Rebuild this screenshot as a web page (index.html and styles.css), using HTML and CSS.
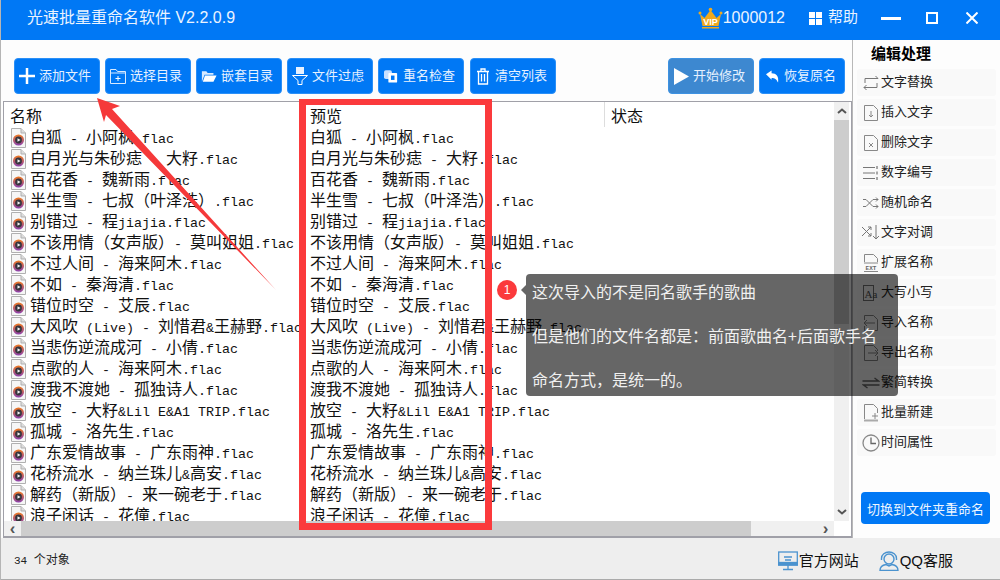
FILE: index.html
```html
<!DOCTYPE html>
<html lang="zh-CN">
<head>
    <meta charset="UTF-8">
    <title>光速批量重命名软件</title>
    <link rel="stylesheet" href="styles.css">
</head>
<body>
    <svg class="defs" width="0" height="0">
        <defs>
            <linearGradient id="disc" x1="0" y1="0" x2="0" y2="1">
                <stop offset="0" stop-color="#f07a1e"/>
                <stop offset="1" stop-color="#8a3fb0"/>
            </linearGradient>
        </defs>
        <symbol id="flac" viewBox="0 0 17 20">
            <path d="M1.500 .5H11L15.500 5V19.500H1.500Z" fill="#f6f6f6" stroke="#b0b0b0"/>
            <path d="M11 .5V5H15.500" fill="#ddd" stroke="#b0b0b0"/>
            <circle cx="8.500" cy="12" r="5.500" fill="url(#disc)"/>
            <circle cx="8.500" cy="12" r="3.400" fill="#34343c"/>
            <path d="M7.500 10.200V13.800L10.500 12Z" fill="#f2f2f2"/>
        </symbol>
    </svg>
    <div class="app">
        <header class="titlebar">
            <div class="app-title">光速批量重命名软件 V2.2.0.9</div>
            <div class="title-right">
                <svg class="vip" width="25" height="22" viewBox="0 0 25 22">
                    <path d="M2 7L6.500 11L12.500 3L18.500 11L23 7L20.500 19H4.500Z" fill="#f0a91e"/>
                    <circle cx="2" cy="6" r="1.500" fill="#f0a91e"/>
                    <circle cx="12.500" cy="2.500" r="1.800" fill="#f0a91e"/>
                    <circle cx="23" cy="6" r="1.500" fill="#f0a91e"/>
                    <rect x="4" y="20" width="17" height="1.500" fill="#f0a91e"/>
                    <text x="12.500" y="18" class="vip-text">VIP</text>
                </svg>
                <span class="user-id">1000012</span>
                <svg class="help-icon" width="13" height="13" viewBox="0 0 13 13" fill="#fff">
                    <rect width="6" height="6"/><rect x="7" width="6" height="6"/>
                    <rect y="7" width="6" height="6"/><rect x="7" y="7" width="6" height="6"/>
                </svg>
                <span class="help">帮助</span>
                <svg class="win-btn btn-min" width="20" height="3"><rect width="20" height="3" fill="#fff"/></svg>
                <svg class="win-btn btn-max" width="12" height="12"><rect x="1" y="1" width="10" height="10" fill="none" stroke="#fff" stroke-width="2"/></svg>
                <svg class="win-btn btn-close" width="12" height="12"><path d="M.5 .5L11.500 11.500M11.500 .5L.5 11.500" stroke="#fff" stroke-width="2"/></svg>
            </div>
        </header>

        <div class="main">
            <div class="left">
                <div class="toolbar">
                    <button class="tool">
                        <span class="tool-icon"><svg width="16" height="16" viewBox="0 0 16 16"><path d="M8 0V16M0 8H16" stroke="#fff" stroke-width="2.500"/></svg></span>添加文件
                    </button>
                    <button class="tool">
                        <span class="tool-icon"><svg width="16" height="16" viewBox="0 0 16 16" fill="none" stroke="#d8eaff"><path d="M.5 15.500V1.500H6L7.500 3.500H15.500V15.500Z"/><path d="M.5 5H15.500"/><path d="M8 8V13M5.500 10.500H10.500" stroke="#fff"/></svg></span>选择目录
                    </button>
                    <button class="tool">
                        <span class="tool-icon"><svg width="16" height="13" viewBox="0 0 18 14"><path d="M1 13V1H6L7.500 3H14V5H4L1 13Z" fill="#d8eaff"/><path d="M4.500 6H17.500L14 13H2Z" fill="#fff"/></svg></span>嵌套目录
                    </button>
                    <button class="tool">
                        <span class="tool-icon"><svg width="16" height="18" viewBox="0 0 16 18"><rect x="4" y="0" width="8" height="7" fill="#e6f1ff"/><path d="M.5 8.500H15.500L10 13.500V17.500H6V13.500Z" fill="none" stroke="#fff"/></svg></span>文件过虑
                    </button>
                    <button class="tool">
                        <span class="tool-icon"><svg width="14" height="14" viewBox="0 0 16 15"><rect x="0" y="1" width="9" height="10" rx="2" fill="#c9e0ff"/><rect x="5" y="4" width="10" height="11" rx="1" fill="#fff"/><rect x="8" y="7" width="4" height="5" fill="#0078f5"/></svg></span>重名检查
                    </button>
                    <button class="tool tool-clear">
                        <span class="tool-icon"><svg width="14" height="17" viewBox="0 0 14 17" fill="none" stroke="#fff" stroke-width="1.300"><path d="M1 3.500H13M5 3V1H9V3"/><path d="M2.500 3.500V16H11.500V3.500"/><path d="M5.500 6V13.500M8.500 6V13.500"/></svg></span>清空列表
                    </button>
                    <div class="tool-space"></div>
                    <button class="tool start">
                        <span class="tool-icon"><svg width="15" height="17" viewBox="0 0 15 17"><path d="M0 0L15 8.500L0 17Z" fill="#fff"/></svg></span>开始修改
                    </button>
                    <button class="tool">
                        <span class="tool-icon"><svg width="13" height="13" viewBox="0 0 14 13"><path d="M0 4L6 0V3C11 3 14 6 13 13C11 9 9.500 8 6 8V10Z" fill="#fff"/></svg></span>恢复原名
                    </button>
                </div>

                <div class="table">
                    <div class="table-view">
                        <div class="table-head">
                            <div class="col col-name">名称</div>
                            <div class="col col-preview">预览</div>
                            <div class="col col-state">状态</div>
                        </div>
                        <div class="rows">
                            <div class="row"><div class="col col-name"><svg class="ficon"><use href="#flac"/></svg>白狐<i> - </i>小阿枫<i>.flac</i></div><div class="col col-preview">白狐<i> - </i>小阿枫<i>.flac</i></div></div>
                            <div class="row"><div class="col col-name"><svg class="ficon"><use href="#flac"/></svg>白月光与朱砂痣<i> - </i>大籽<i>.flac</i></div><div class="col col-preview">白月光与朱砂痣<i> - </i>大籽<i>.flac</i></div></div>
                            <div class="row"><div class="col col-name"><svg class="ficon"><use href="#flac"/></svg>百花香<i> - </i>魏新雨<i>.flac</i></div><div class="col col-preview">百花香<i> - </i>魏新雨<i>.flac</i></div></div>
                            <div class="row"><div class="col col-name"><svg class="ficon"><use href="#flac"/></svg>半生雪<i> - </i>七叔（叶泽浩）<i>.flac</i></div><div class="col col-preview">半生雪<i> - </i>七叔（叶泽浩）<i>.flac</i></div></div>
                            <div class="row"><div class="col col-name"><svg class="ficon"><use href="#flac"/></svg>别错过<i> - </i>程<i>jiajia.flac</i></div><div class="col col-preview">别错过<i> - </i>程<i>jiajia.flac</i></div></div>
                            <div class="row"><div class="col col-name"><svg class="ficon"><use href="#flac"/></svg>不该用情（女声版）<i>- </i>莫叫姐姐<i>.flac</i></div><div class="col col-preview">不该用情（女声版）<i>- </i>莫叫姐姐<i>.flac</i></div></div>
                            <div class="row"><div class="col col-name"><svg class="ficon"><use href="#flac"/></svg>不过人间<i> - </i>海来阿木<i>.flac</i></div><div class="col col-preview">不过人间<i> - </i>海来阿木<i>.flac</i></div></div>
                            <div class="row"><div class="col col-name"><svg class="ficon"><use href="#flac"/></svg>不如<i> - </i>秦海清<i>.flac</i></div><div class="col col-preview">不如<i> - </i>秦海清<i>.flac</i></div></div>
                            <div class="row"><div class="col col-name"><svg class="ficon"><use href="#flac"/></svg>错位时空<i> - </i>艾辰<i>.flac</i></div><div class="col col-preview">错位时空<i> - </i>艾辰<i>.flac</i></div></div>
                            <div class="row"><div class="col col-name"><svg class="ficon"><use href="#flac"/></svg>大风吹<i> (Live) - </i>刘惜君<i>&amp;</i>王赫野<i>.flac</i></div><div class="col col-preview">大风吹<i> (Live) - </i>刘惜君<i>&amp;</i>王赫野<i>.flac</i></div></div>
                            <div class="row"><div class="col col-name"><svg class="ficon"><use href="#flac"/></svg>当悲伤逆流成河<i> - </i>小倩<i>.flac</i></div><div class="col col-preview">当悲伤逆流成河<i> - </i>小倩<i>.flac</i></div></div>
                            <div class="row"><div class="col col-name"><svg class="ficon"><use href="#flac"/></svg>点歌的人<i> - </i>海来阿木<i>.flac</i></div><div class="col col-preview">点歌的人<i> - </i>海来阿木<i>.flac</i></div></div>
                            <div class="row"><div class="col col-name"><svg class="ficon"><use href="#flac"/></svg>渡我不渡她<i> - </i>孤独诗人<i>.flac</i></div><div class="col col-preview">渡我不渡她<i> - </i>孤独诗人<i>.flac</i></div></div>
                            <div class="row"><div class="col col-name"><svg class="ficon"><use href="#flac"/></svg>放空<i> - </i>大籽<i>&amp;Lil E&amp;A1 TRIP.flac</i></div><div class="col col-preview">放空<i> - </i>大籽<i>&amp;Lil E&amp;A1 TRIP.flac</i></div></div>
                            <div class="row"><div class="col col-name"><svg class="ficon"><use href="#flac"/></svg>孤城<i> - </i>洛先生<i>.flac</i></div><div class="col col-preview">孤城<i> - </i>洛先生<i>.flac</i></div></div>
                            <div class="row"><div class="col col-name"><svg class="ficon"><use href="#flac"/></svg>广东爱情故事<i> - </i>广东雨神<i>.flac</i></div><div class="col col-preview">广东爱情故事<i> - </i>广东雨神<i>.flac</i></div></div>
                            <div class="row"><div class="col col-name"><svg class="ficon"><use href="#flac"/></svg>花桥流水<i> - </i>纳兰珠儿<i>&amp;</i>高安<i>.flac</i></div><div class="col col-preview">花桥流水<i> - </i>纳兰珠儿<i>&amp;</i>高安<i>.flac</i></div></div>
                            <div class="row"><div class="col col-name"><svg class="ficon"><use href="#flac"/></svg>解药（新版）<i>- </i>来一碗老于<i>.flac</i></div><div class="col col-preview">解药（新版）<i>- </i>来一碗老于<i>.flac</i></div></div>
                            <div class="row"><div class="col col-name"><svg class="ficon"><use href="#flac"/></svg>浪子闲话<i> - </i>花僮<i>.flac</i></div><div class="col col-preview">浪子闲话<i> - </i>花僮<i>.flac</i></div></div>
                        </div>
                        <div class="hscroll">
                            <span class="sb-arrow">‹</span>
                            <div class="hthumb"></div>
                            <span class="sb-arrow">›</span>
                        </div>
                    </div>
                    <div class="vscroll">
                        <svg class="sb-icon" width="10" height="6"><path d="M1 5L5 1.500L9 5" fill="none" stroke="#555" stroke-width="2"/></svg>
                        <div class="vthumb"></div>
                        <svg class="sb-icon sb-down" width="10" height="6"><path d="M1 1L5 4.500L9 1" fill="none" stroke="#555" stroke-width="2"/></svg>
                    </div>
                </div>
            </div>

            <aside class="side">
                <div class="side-title">编辑处理</div>
                <div class="side-item">
                    <svg width="16" height="16" viewBox="0 0 16 16" fill="none" stroke="#777"><path d="M2 8V3.500H15M12.500 1L15 3.500"/><path d="M14 8V12.500H1M3.500 10L1 12.500L3.500 15"/></svg><span>文字替换</span>
                </div>
                <div class="side-item">
                    <svg width="16" height="16" viewBox="0 0 16 16" fill="none" stroke="#888"><path d="M1.500 .5H10.500L14.500 4.500V15.500H1.500Z"/><path d="M8 6V12M6 10L8 12L10 10"/></svg><span>插入文字</span>
                </div>
                <div class="side-item">
                    <svg width="16" height="16" viewBox="0 0 16 16" fill="none" stroke="#888"><path d="M1.500 .5H10.500L14.500 4.500V15.500H1.500Z"/><path d="M6 8L10 12M10 8L6 12"/></svg><span>删除文字</span>
                </div>
                <div class="side-item">
                    <svg width="16" height="16" viewBox="0 0 16 16" fill="none" stroke="#777"><path d="M0 2.500H12M0 8H12M0 13.500H12"/><path d="M14 1V4M14 6.500V9.500M14 12V15" stroke="#555"/></svg><span>数字编号</span>
                </div>
                <div class="side-item">
                    <svg width="16" height="12" viewBox="0 0 16 12" fill="none" stroke="#777"><path d="M0 2.500H3L10 9.500H15M0 9.500H3L10 2.500H15M13 .5L15 2.500L13 4.500M13 7.500L15 9.500L13 11.500"/></svg><span>随机命名</span>
                </div>
                <div class="side-item">
                    <svg width="18" height="15" viewBox="0 0 18 15" fill="none" stroke="#777"><path d="M0 2L9 11M0 11L9 2M6 2H9V5M6 11H9V8"/><path d="M14 0V14M11 11L14 14L17 11"/></svg><span>文字对调</span>
                </div>
                <div class="side-item">
                    <svg width="16" height="18" viewBox="0 0 16 18" fill="none" stroke="#888"><path d="M1.500 8V.5H10.500L14.500 4.500V8"/><text x="8" y="16" class="ext-text">EXT</text><path d="M1 9H15M1 17.500H15"/></svg><span>扩展名称</span>
                </div>
                <div class="side-item">
                    <svg width="16" height="16" viewBox="0 0 16 16" fill="none" stroke="#777"><rect x=".5" y=".5" width="10" height="15"/><text x="1.500" y="13" class="aa-text">Aa</text></svg><span>大写小写</span>
                </div>
                <div class="side-item">
                    <svg width="16" height="16" viewBox="0 0 16 16" fill="none" stroke="#888"><path d="M1.500 5V.5H10.500L14.500 4.500V15.500H1.500V11"/><path d="M12 8H1M4 5L1 8L4 11"/></svg><span>导入名称</span>
                </div>
                <div class="side-item">
                    <svg width="16" height="16" viewBox="0 0 16 16" fill="none" stroke="#888"><path d="M1.500 15.500V.5H10.500L14.500 4.500V6M14.500 11V15.500H1.500"/><path d="M5 8H15M12 5L15 8L12 11"/></svg><span>导出名称</span>
                </div>
                <div class="side-item">
                    <svg width="17" height="12" viewBox="0 0 17 12" fill="none" stroke="#666" stroke-width="1.300"><path d="M0 4H16L12 1M17 8H1L5 11"/></svg><span>繁简转换</span>
                </div>
                <div class="side-item">
                    <svg width="16" height="18" viewBox="0 0 16 18" fill="none" stroke="#888"><path d="M1.500 15V.5H10.500L14.500 4.500V9"/><path d="M9 12H15M12 9V15"/><path d="M1 16.500H15" stroke="#aaa" stroke-width="2"/></svg><span>批量新建</span>
                </div>
                <div class="side-item">
                    <svg width="18" height="18" viewBox="0 0 18 18" fill="none" stroke="#888" stroke-width="1.300"><circle cx="9" cy="9" r="8"/><path d="M9 3.500V9.500H14" stroke="#666"/></svg><span>时间属性</span>
                </div>
                <button class="switch-btn">切换到文件夹重命名</button>
            </aside>
        </div>

        <footer class="statusbar">
            <span class="count"><i>34 </i>个对象</span>
            <div class="links">
                <a class="link">
                    <svg width="20" height="20" viewBox="0 0 20 20" fill="none" stroke="#4b93cf" stroke-width="1.300"><rect x=".7" y="1" width="18.600" height="13"/><rect x=".7" y="11.500" width="18.600" height="2.500" fill="#4b93cf"/><path d="M6 6H14M7 9H13M10 14V18M5 18.500H15"/></svg>官方网站
                </a>
                <a class="link">
                    <svg width="20" height="20" viewBox="0 0 20 20" fill="none" stroke="#4b93cf" stroke-width="1.400"><circle cx="10" cy="8" r="5"/><path d="M2.500 9V7.500C2.500 3.500 6 1 10 1C14 1 17.500 3.500 17.500 7.500V9"/><path d="M1 19.500C1 16 4 14 7 13.500L10 15L13 13.500C16 14 19 16 19 19.500Z"/></svg>QQ客服
                </a>
            </div>
        </footer>

        <!-- 标注 -->
        <div class="red-box"></div>
        <svg class="red-arrow" width="290" height="300" viewBox="0 0 290 300">
            <polygon points="97,98 120,106 112,109 276,290 106,115 104,122" fill="#f5393a"/>
        </svg>
        <div class="badge">1</div>
        <div class="tip">
            <p>这次导入的不是同名歌手的歌曲</p>
            <p>但是他们的文件名都是：前面歌曲名+后面歌手名</p>
            <p>命名方式，是统一的。</p>
        </div>
    </div>
</body>
</html>
```

FILE: styles.css
```css
* {
    box-sizing: border-box;
}
body {
    margin: 0;
    font-family: "Noto Sans CJK SC", "Liberation Sans", sans-serif;
    background: #fff;
}
.defs {
    position: absolute;
}
.app {
    position: relative;
    width: 1000px;
    height: 580px;
    overflow: hidden;
    display: flex;
    flex-direction: column;
    background: #fdfdfd;
    border-left: 1px solid #b5b5b5;
}

/* 标题栏 */
.titlebar {
    height: 40px;
    background: #0078f5;
    color: #eaf3ff;
    display: flex;
    align-items: center;
    justify-content: space-between;
    padding: 0 22px 4px 27px;
    margin-left: -1px;
    flex-shrink: 0;
}
.app-title {
    font-family: "Liberation Sans", "Noto Sans CJK SC", sans-serif;
    font-size: 16px;
    line-height: 24px;
}
.title-right {
    display: flex;
    align-items: center;
    font-family: "Liberation Sans", "Noto Sans CJK SC", sans-serif;
}
.vip-text {
    font: bold 9px "Liberation Sans", sans-serif;
    fill: #fff;
    text-anchor: middle;
}
.user-id {
    font-size: 16px;
    margin-right: 24px;
}
.help {
    font-size: 15px;
    line-height: 20px;
    margin: -3px 0 0 6px;
}
.help-icon {
    display: block;
}
.win-btn {
    display: block;
}
.btn-min {
    margin-left: 23px;
}
.btn-max {
    margin-left: 25px;
}
.btn-close {
    margin-left: 28px;
}

.main {
    flex: 1;
    display: flex;
    min-height: 0;
}
.left {
    width: 851px;
    display: flex;
    flex-direction: column;
}

/* 工具栏 */
.toolbar {
    height: 61px;
    display: flex;
    gap: 5px;
    padding: 18px 0 0 13px;
    flex-shrink: 0;
}
.tool {
    width: 86px;
    height: 36px;
    background: #0078f5;
    border: 1px solid #2a8ff7;
    border-radius: 4px;
    color: #e6f1ff;
    font-family: inherit;
    font-size: 13px;
    line-height: 18px;
    padding: 0 0 2px 0;
    display: flex;
    align-items: center;
}
.tool-icon {
    width: 24px;
    margin-top: 2px;
    display: flex;
    justify-content: center;
    flex-shrink: 0;
}
.tool-clear {
    margin-left: 1px;
}
.tool.start {
    background: #3d88d0;
    border-color: #3d92e2;
}
.tool-space {
    width: 102px;
}

/* 列表 */
.table {
    flex: 1;
    margin-left: 2px;
    display: flex;
    border: 1px solid #a0a0a8;
    border-bottom-width: 2px;
    background: #fff;
    min-height: 0;
}
.table-view {
    width: 830px;
    display: flex;
    flex-direction: column;
}
.table-head {
    height: 24px;
    display: flex;
    font-size: 16px;
    line-height: 26px;
    color: #111;
    flex-shrink: 0;
}
.table-head .col {
    padding-left: 6px;
}
.table-head .col-state {
    border-left: 1px solid #ddd;
    height: 25px;
}
.col-name {
    width: 300px;
    flex-shrink: 0;
}
.col-preview {
    width: 300px;
    flex-shrink: 0;
    white-space: nowrap;
}
.col-state {
    flex: 1;
}
.rows {
    flex: 1;
    overflow: hidden;
}
.row {
    display: flex;
    height: 21px;
    font-size: 16px;
    line-height: 21px;
    color: #111;
    white-space: nowrap;
}
.row .col {
    padding-left: 6px;
}
.row i {
    font: normal 13.33px/21px "Liberation Mono", monospace;
    white-space: pre;
}
.ficon {
    width: 17px;
    height: 20px;
    margin-right: 3px;
    vertical-align: -5px;
}

/* 滚动条 */
.hscroll {
    height: 15px;
    background: #f0f0f0;
    display: flex;
    align-items: center;
    flex-shrink: 0;
}
.sb-arrow {
    width: 17px;
    text-align: center;
    font: bold 17px/13px "Liberation Sans", sans-serif;
    color: #555;
}
.hthumb {
    width: 730px;
    height: 15px;
    background: #cdcdcd;
    margin-right: auto;
}
.vscroll {
    width: 15px;
    background: #f0f0f0;
    display: flex;
    flex-direction: column;
    align-items: center;
    margin-bottom: 15px;
}
.sb-icon {
    margin: 6px 0;
    flex-shrink: 0;
}
.sb-down {
    margin-top: auto;
}
.vthumb {
    width: 15px;
    height: 204px;
    background: #cdcdcd;
}

/* 右侧 */
.side {
    flex: 1;
    border-left: 1px solid #b8b8b8;
    background: #fdfdfd;
    padding: 0 4px 14px 4px;
    display: flex;
    flex-direction: column;
    gap: 3px;
}
.side-title {
    height: 26px;
    font-size: 15px;
    font-weight: bold;
    line-height: 26px;
    padding-left: 14px;
    color: #000;
}
.side-item {
    height: 27px;
    background: #f9f9f9;
    border-radius: 3px;
    font-size: 13px;
    color: #222;
    display: flex;
    align-items: center;
    gap: 1px;
    padding-left: 5px;
}
.side-item span {
    line-height: 18px;
    margin-top: -3px;
}
.side-item svg {
    width: 18px;
    flex-shrink: 0;
}
.ext-text {
    font: bold 6px "Liberation Mono", monospace;
    fill: #666;
    stroke: none;
    text-anchor: middle;
}
.aa-text {
    font: 11px "Liberation Serif", serif;
    fill: #555;
    stroke: none;
}
.switch-btn {
    width: 129px;
    height: 32px;
    margin: auto 0 0 4px;
    background: #0078f5;
    border: none;
    border-radius: 4px;
    color: #eef6ff;
    font-family: inherit;
    font-size: 13px;
    padding: 0;
}

/* 状态栏 */
.statusbar {
    height: 42px;
    background: #eeeeee;
    border-bottom: 1px solid #aaa;
    display: flex;
    align-items: center;
    justify-content: space-between;
    padding: 0 47px 0 13px;
    flex-shrink: 0;
}
.count {
    font-size: 12px;
    color: #222;
}
.count i {
    font: normal 11px "Liberation Mono", monospace;
    white-space: pre;
}
.links {
    display: flex;
    gap: 20px;
    margin-top: 4px;
}
.link {
    display: flex;
    align-items: center;
    font-size: 15px;
    line-height: 22px;
    color: #111;
    font-family: "Liberation Sans", "Noto Sans CJK SC", sans-serif;
    gap: 1px;
}

/* 标注层 */
.red-box {
    position: absolute;
    left: 298px;
    top: 99px;
    width: 193px;
    height: 431px;
    border: 7px solid #fb3a3c;
    border-top-width: 6px;
}
.red-arrow {
    position: absolute;
    left: -1px;
    top: 0;
}
.badge {
    position: absolute;
    left: 496px;
    top: 280px;
    width: 20px;
    height: 20px;
    border-radius: 50%;
    background: #fb3a3c;
    color: #fff;
    font: 12px/20px "Liberation Sans", sans-serif;
    text-align: center;
}
.tip {
    position: absolute;
    left: 525px;
    top: 274px;
    width: 372px;
    height: 122px;
    background: rgba(0, 0, 0, 0.6);
    border-radius: 4px;
    padding: 0 6px;
    color: #f0f0f0;
    font-size: 16px;
    line-height: 44px;
}
.tip::before {
    content: "";
    position: absolute;
    left: -5px;
    top: 11px;
    border-top: 5px solid transparent;
    border-bottom: 5px solid transparent;
    border-right: 5px solid rgba(0, 0, 0, 0.6);
}
.tip p {
    margin: 0;
    white-space: nowrap;
}
.tip p:first-child {
    margin-top: -5px;
}
```
